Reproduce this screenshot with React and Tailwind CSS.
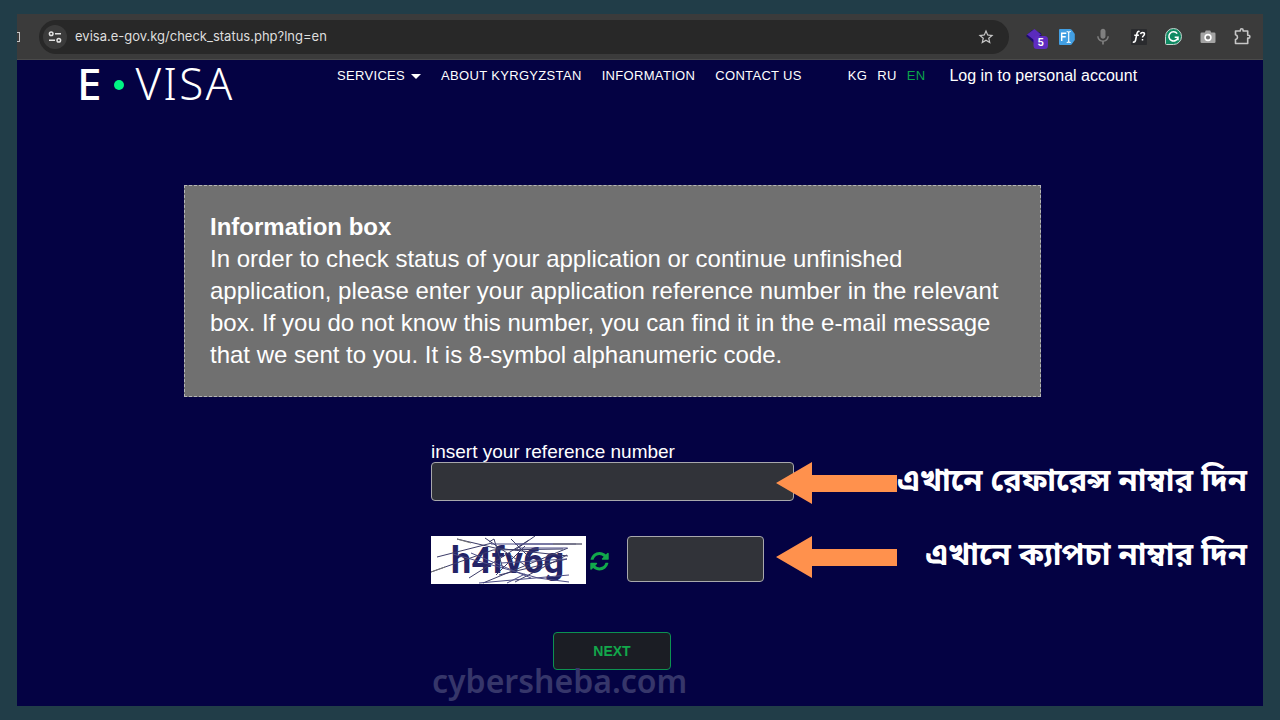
import React from "react";
import { MdMic, MdStarBorder } from "react-icons/md";

const navLinks = ["ABOUT KYRGYZSTAN", "INFORMATION", "CONTACT US"];

function TuneIcon() {
  return (
    <svg viewBox="0 0 14 12" className="h-3 w-3.5" fill="none" stroke="#e3e3e3" strokeWidth="1.5">
      <circle cx="3.2" cy="2.8" r="1.8" />
      <path d="M7 2.8h6M1 9.2h6" />
      <circle cx="10.8" cy="9.2" r="1.8" />
    </svg>
  );
}

function CubeIcon() {
  return (
    <svg viewBox="0 0 24 24" className="h-6 w-6">
      <path d="M1 11 7 5l9 3 1 5-7 6z" fill="#1d0b70" />
      <path d="M2 9.500 9.500 4l6.500 5.500-7 5.500z" fill="#5a2bbd" />
      <rect x="8.500" y="11" width="14.500" height="13" rx="3.500" fill="#5f2cc0" />
      <text x="15.800" y="21" textAnchor="middle" fontSize="10" fontWeight="700" fill="#fff" fontFamily="Inter, sans-serif">5</text>
    </svg>
  );
}

function TextFieldIcon() {
  return (
    <svg viewBox="0 0 16 16" className="h-4 w-4">
      <path d="M1 0h10q1.500 0 2.300 1.500L15.800 5v6l-2.500 3.500Q12.500 16 11 16H1q-1 0-1-1V1q0-1 1-1z" fill="#429fe3" />
      <path d="M2.700 12V4.200h4.600M2.700 7.800h4" stroke="#fff" strokeWidth="1.400" fill="none" />
      <path d="M7.700 2.500q2 0 2 1.300 0-1.300 2-1.300M9.700 3.500v9M7.700 13.500q2 0 2-1.300 0 1.300 2 1.300" stroke="#fff" strokeWidth="1.100" fill="none" />
    </svg>
  );
}

function FontQueryIcon() {
  return (
    <svg viewBox="0 0 16 16" className="h-4 w-4">
      <rect width="16" height="16" rx="1" fill="#2a2b2e" />
      <path d="M8.600 2.600Q6.600 1.600 6 4.400L4.600 11q-.5 2.600-2.800 2M3.300 6.200h4.600" fill="none" stroke="#fff" strokeWidth="1.600" />
      <path d="M9.600 5.200q.2-1.700 2-1.700 1.900 0 1.900 1.600 0 1-1.100 1.700-.9.600-.9 1.700M11.500 10v1.600" fill="none" stroke="#fff" strokeWidth="1.500" />
    </svg>
  );
}

function GrammarIcon() {
  return (
    <svg viewBox="0 0 17 17" className="h-[17px] w-[17px]">
      <path d="M8.500.5a8 8 0 1 1 0 16h-7a1 1 0 0 1-1-1v-7a8 8 0 0 1 8-8z" fill="#0f8a63" stroke="#c5d5d0" />
      <path d="M12.200 5.600A4.600 4.600 0 1 0 13 9.300H9.700M13 9.300v3" fill="none" stroke="#fff" strokeWidth="1.500" />
    </svg>
  );
}

function CameraIcon() {
  return (
    <svg viewBox="0 0 16 16" className="h-4 w-4">
      <path d="M1.800 3.500h3L5.800 1.500h4.400l1 2h3q1.300 0 1.300 1.300v7.900q0 1.300-1.300 1.300H1.800Q.5 14 .5 12.700V4.800q0-1.300 1.300-1.300z" fill="#a3a3a3" />
      <circle cx="8" cy="8.500" r="2.900" fill="#777" stroke="#fff" strokeWidth="1.600" />
    </svg>
  );
}

function PuzzleIcon() {
  return (
    <svg viewBox="0 0 17 17" className="h-[17px] w-[17px]" fill="none" stroke="#c7c7c7" strokeWidth="1.600" strokeLinejoin="round">
      <path d="M1.500 3h4.800V2.200a1.400 1.400 0 0 1 2.800 0V3h4.600v4.300h.8a1.400 1.400 0 0 1 0 2.800h-.8v5.400H1.500v-3.900q2-.5 2-2.400t-2-2.400z" />
    </svg>
  );
}

function RefreshIcon() {
  return (
    <svg viewBox="0 0 1536 1664" className="h-5 w-[19px]" fill="#12a84b">
      <path d="M1511 928q0 5-1 7-64 268-268 434.500t-478 166.500q-146 0-282.500-55t-243.500-157l-129 129q-19 19-45 19t-45-19-19-45v-448q0-26 19-45t45-19h448q26 0 45 19t19 45-19 45l-137 137q71 66 161 102t187 36q134 0 250-65t186-179q11-17 53-117 8-23 30-23h192q13 0 22.500 9.500t9.500 22.500zm25-800v448q0 26-19 45t-45 19h-448q-26 0-45-19t-19-45 19-45l138-138q-148-137-349-137-134 0-250 65t-186 179q-11 17-53 117-8 23-30 23h-199q-13 0-22.500-9.500t-9.500-22.500v-7q65-268 270-434.500t480-166.500q146 0 284 55.500t245 156.500l130-129q19-19 45-19t45 19 19 45z" />
    </svg>
  );
}

function Captcha() {
  return (
    <svg viewBox="0 0 155 48" className="h-12 w-[155px]" role="img" aria-label="Captcha">
      <rect width="155" height="48" fill="#fff" />
      <text x="20" y="37" fontSize="36" fontWeight="700" fill="#232366" fontFamily="Roboto, sans-serif">h4fv6g</text>
      <g fill="none" strokeWidth="1">
        <path d="M26 3 64 12 137 20M6 21l55-14M0 36l62-22 70-1M38 42l60-38M52 47l85-35M68 39l68-16M54 2l44 30M65 39l29-29M84 46l52-27M58 6l5-3 9 30M80 3l18 18M104 0 84 14" stroke="#3c3c68" />
        <path d="M60 8h85M84 8h67M88 12h48M48 47l90-8M70 27l66-4M22 18l85 24 31 4M40 17l60 25M76 47l18-9" stroke="#4d4d86" />
        <path d="M122 8h29M0 36l14-5M26 3l14 4" stroke="#777" />
      </g>
    </svg>
  );
}

function Annotation({ children }) {
  return (
    <div className="absolute top-0 right-4 left-[759px] flex items-start justify-between">
      <svg viewBox="0 0 121 42" className="h-[42px] w-[121px] shrink-0" fill="#ff914d">
        <path d="M0 21 36 0v13h85v17H36v12z" />
      </svg>
      <span className="font-['Noto_Sans_Bengali','Noto_Sans',sans-serif] text-[31px] leading-11 font-bold whitespace-nowrap">
        {children}
      </span>
    </div>
  );
}

export default function App() {
  return (
    <div className="min-h-screen bg-[#213d48] px-[17px] py-3.5 font-['Liberation_Sans',Arial,sans-serif] text-white">
      <div className="flex h-[46px] items-center border-b border-[#4a4a4a] bg-[#3b3b3b] pr-3">
        <span className="mr-[19px] h-2.5 w-[3px] border-y border-r border-[#c7c7c7]" />
        <div className="flex h-[34px] flex-1 items-center rounded-full bg-[#282828] pr-3.5 pl-1">
          <button aria-label="Site information" className="flex h-6 w-6 items-center justify-center rounded-full bg-[#3b3b3b]">
            <TuneIcon />
          </button>
          <input
            aria-label="Address"
            defaultValue="evisa.e-gov.kg/check_status.php?lng=en"
            className="ml-2 min-w-0 flex-1 bg-transparent font-['Inter',sans-serif] text-[13px] text-[#dedede] outline-none"
          />
          <button aria-label="Bookmark"><MdStarBorder className="h-[18px] w-[18px] text-[#c7c7c7]" /></button>
        </div>
        <div className="ml-4 flex items-center gap-[18px]">
          <button aria-label="Cube extension"><CubeIcon /></button>
          <button aria-label="Text field extension" className="-ml-2"><TextFieldIcon /></button>
          <button aria-label="Microphone"><MdMic className="h-5 w-5 text-[#808080]" /></button>
          <button aria-label="Font finder"><FontQueryIcon /></button>
          <button aria-label="Grammar checker"><GrammarIcon /></button>
          <button aria-label="Screenshot"><CameraIcon /></button>
          <button aria-label="Extensions"><PuzzleIcon /></button>
        </div>
      </div>

      <div className="bg-[#040243]">
        <header className="flex items-start pl-[60px]">
          <a href="#home" className="flex h-[46px] w-[260px] items-center font-['Noto_Sans','Open_Sans',sans-serif] text-[44px] leading-none">
            <span className="font-medium">E</span>
            <span className="mt-1 mr-3 ml-3 h-2.5 w-2.5 rounded-full bg-[#00f583]" />
            <span className="font-light tracking-wider">VISA</span>
          </a>
          <nav className="flex items-center pt-1 text-[13px] leading-6 tracking-wide">
            <button className="flex items-center gap-1.5 tracking-wide">
              SERVICES
              <svg viewBox="0 0 10 5" className="h-[5px] w-2.5" fill="#fff"><path d="M0 0h10L5 5z" /></svg>
            </button>
            {navLinks.map((label) => (
              <a key={label} href="#nav" className="ml-5">{label}</a>
            ))}
            <a href="#kg" className="ml-[46px]">KG</a>
            <a href="#ru" className="ml-2.5">RU</a>
            <a href="#en" className="ml-2.5 text-[#0ba54b]">EN</a>
            <a href="#login" className="ml-6 text-base tracking-normal">Log in to personal account</a>
          </nav>
        </header>

        <main className="pt-[79px]">
          <section className="mr-[222px] ml-[167px] border border-dashed border-[#b5b5b5] bg-[#707070] px-[25px] py-[25px] text-2xl leading-8">
            <h1 className="font-bold">Information box</h1>
            <p>
              In order to check status of your application or continue unfinished application, please enter your
              application reference number in the relevant box. If you do not know this number, you can find it in the
              e-mail message that we sent to you. It is 8-symbol alphanumeric code.
            </p>
          </section>

          <form className="pt-[45px]" onSubmit={(e) => e.preventDefault()}>
            <label htmlFor="reference" className="ml-[414px] block text-[19px] leading-5">insert your reference number</label>
            <div className="relative pl-[414px]">
              <input id="reference" className="block h-[39px] w-[363px] rounded-sm border border-[#a8a8ac] bg-[#313339] px-3" />
              <Annotation>এখানে রেফারেন্স নাম্বার দিন</Annotation>
            </div>
            <div className="relative mt-[35px] flex items-start pl-[414px]">
              <Captcha />
              <button type="button" aria-label="Refresh captcha" className="mt-4 ml-1"><RefreshIcon /></button>
              <input aria-label="Captcha" className="ml-[18px] h-[46px] w-[137px] rounded-sm border border-[#a8a8ac] bg-[#313339] px-3" />
              <Annotation>এখানে ক্যাপচা নাম্বার দিন</Annotation>
            </div>
            <button type="submit" className="mt-12 ml-[536px] block h-[38px] w-[118px] rounded-sm border border-[#0d9251] bg-[#1b1d24] text-sm font-bold text-[#12a84b]">
              NEXT
            </button>
          </form>
          <p className="-mt-1.5 ml-[415px] pb-2 font-['Noto_Sans',sans-serif] text-[32px] leading-[34px] font-semibold text-[#36366a]">cybersheba.com</p>
        </main>
      </div>
    </div>
  );
}
